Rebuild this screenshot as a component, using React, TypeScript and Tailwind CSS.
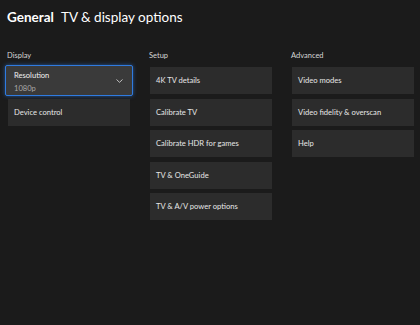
import React from 'react';

function Card({ label }: { label: string }) {
  return (
    <div className="h-[27px] flex items-center px-[6px] pt-[1px] bg-[#2c2c2c] text-[7.6px] text-[#e6e6e6]">
      {label}
    </div>
  );
}

function Column({ title, children }: { title: string; children: React.ReactNode }) {
  return (
    <div className="w-[122px] flex flex-col">
      <div className="text-[7.5px] text-[#d6d6d6] h-[17px] -ml-[1px]">{title}</div>
      <div className="flex flex-col gap-[4.5px]">{children}</div>
    </div>
  );
}

export default function App() {
  return (
    <div className="w-[420px] h-[325px] bg-[#1b1b1b] overflow-hidden font-['Lato',sans-serif]">
      <div className="flex items-baseline gap-[7px] pl-[7px] pt-[7px] text-white text-[13.5px] leading-[20px]">
        <span className="font-bold">General</span>
        <span>TV &amp; display options</span>
      </div>
      <div className="flex gap-[20px] pl-[8px] pt-[23px]">
        <Column title="Display">
          <div className="h-[27px]">
            <div className="-mx-[3px] -my-[2px] h-[31px] flex items-center justify-between pl-[8px] pr-[9px] bg-[#3a3a3a] border-[1.5px] border-[#2f7be0] rounded-[2px] shadow-[0_0_4px_rgba(47,123,224,0.6)]">
              <div className="flex flex-col leading-[13px] pt-[2px]">
                <span className="text-[7.6px] text-[#f0f0f0]">Resolution</span>
                <span className="text-[7.6px] text-[#a8a8a8]">1080p</span>
              </div>
              <svg width="7" height="4" viewBox="0 0 7 4" fill="none">
                <path d="M0.5 0.5 L3.5 3.3 L6.5 0.5" stroke="#cfcfcf" strokeWidth="0.9" />
              </svg>
            </div>
          </div>
          <Card label="Device control" />
        </Column>
        <Column title="Setup">
          <Card label="4K TV details" />
          <Card label="Calibrate TV" />
          <Card label="Calibrate HDR for games" />
          <Card label="TV & OneGuide" />
          <Card label="TV & A/V power options" />
        </Column>
        <Column title="Advanced">
          <Card label="Video modes" />
          <Card label="Video fidelity & overscan" />
          <Card label="Help" />
        </Column>
      </div>
    </div>
  );
}
